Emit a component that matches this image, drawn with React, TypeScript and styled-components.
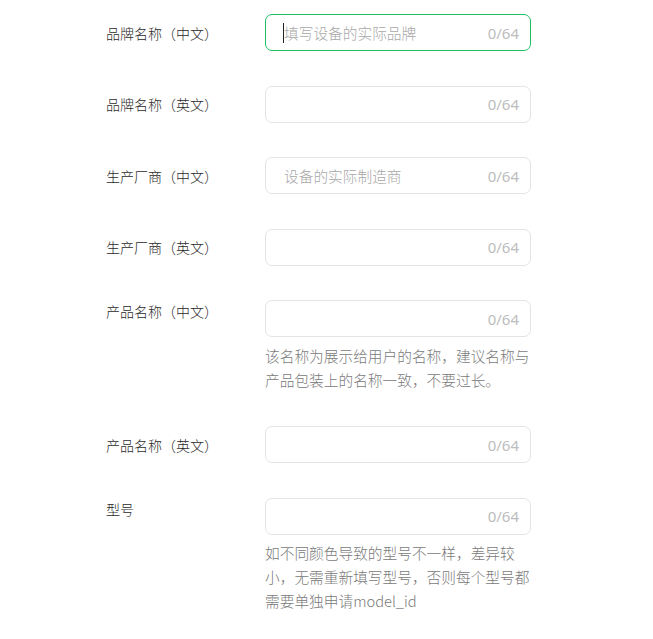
import React from "react";
import styled, { createGlobalStyle } from "styled-components";

const GlobalStyle = createGlobalStyle`
  html, body {
    margin: 0;
    padding: 0;
    background: #ffffff;
  }
  body {
    font-family: "Noto Sans", "Noto Sans CJK SC", sans-serif;
    -webkit-font-smoothing: antialiased;
  }
`;

const Form = styled.div`
  display: flex;
  flex-direction: column;
  gap: 34.5px;
  padding: 14px 0 0 106px;
  width: 425px;
`;

const Row = styled.div`
  display: grid;
  grid-template-columns: 159px 266px;
  align-items: start;
`;

const Label = styled.div<{ $top?: boolean }>`
  font-family: "Noto Sans CJK SC", sans-serif;
  font-size: 14px;
  font-weight: 300;
  line-height: 22px;
  color: #2a2a2a;
  padding-top: ${(p) => (p.$top ? "0" : "7.5px")};
  white-space: nowrap;
`;

const FieldCol = styled.div`
  display: flex;
  flex-direction: column;
`;

const Field = styled.div<{ $focused?: boolean }>`
  position: relative;
  box-sizing: border-box;
  height: 37px;
  width: 266px;
  border: 1px solid ${(p) => (p.$focused ? "#1fbf63" : "#e4e4e4")};
  border-radius: 7px;
  display: flex;
  align-items: center;
  padding: 0 11px 0 18px;
  background: #fff;
`;

const Input = styled.input`
  flex: 1;
  min-width: 0;
  border: none;
  outline: none;
  background: transparent;
  padding: 0;
  font-family: "Noto Sans CJK SC", sans-serif;
  font-size: 14.7px;
  font-weight: 300;
  color: #333;
  &::placeholder {
    color: #a8a8a8;
  }
`;

const Caret = styled.span`
  position: absolute;
  left: 17px;
  top: 8px;
  width: 1px;
  height: 20px;
  background: #222;
`;

const Counter = styled.span`
  font-family: "Noto Sans", sans-serif;
  font-size: 15px;
  color: #bdbdbd;
  margin-left: 8px;
`;

const Help = styled.div`
  margin-top: 6.5px;
  font-family: "Noto Sans CJK SC", sans-serif;
  font-size: 14.7px;
  font-weight: 300;
  line-height: 24px;
  color: #7a7a7a;
  width: 266px;
`;

type Item = {
  label: string;
  placeholder?: string;
  help?: string;
  focused?: boolean;
};

const items: Item[] = [
  { label: "品牌名称（中文）", placeholder: "填写设备的实际品牌", focused: true },
  { label: "品牌名称（英文）" },
  { label: "生产厂商（中文）", placeholder: "设备的实际制造商" },
  { label: "生产厂商（英文）" },
  {
    label: "产品名称（中文）",
    help: "该名称为展示给用户的名称，建议名称与产品包装上的名称一致，不要过长。",
  },
  { label: "产品名称（英文）" },
  {
    label: "型号",
    help: "如不同颜色导致的型号不一样，差异较小，无需重新填写型号，否则每个型号都需要单独申请model_id",
  },
];

export default function App() {
  return (
    <>
      <GlobalStyle />
      <Form>
        {items.map((it) => (
          <Row key={it.label}>
            <Label $top={!!it.help}>{it.label}</Label>
            <FieldCol>
              <Field $focused={it.focused}>
                <Input placeholder={it.placeholder ?? ""} readOnly />
                {it.focused && <Caret />}
                <Counter>0/64</Counter>
              </Field>
              {it.help && <Help>{it.help}</Help>}
            </FieldCol>
          </Row>
        ))}
      </Form>
    </>
  );
}
